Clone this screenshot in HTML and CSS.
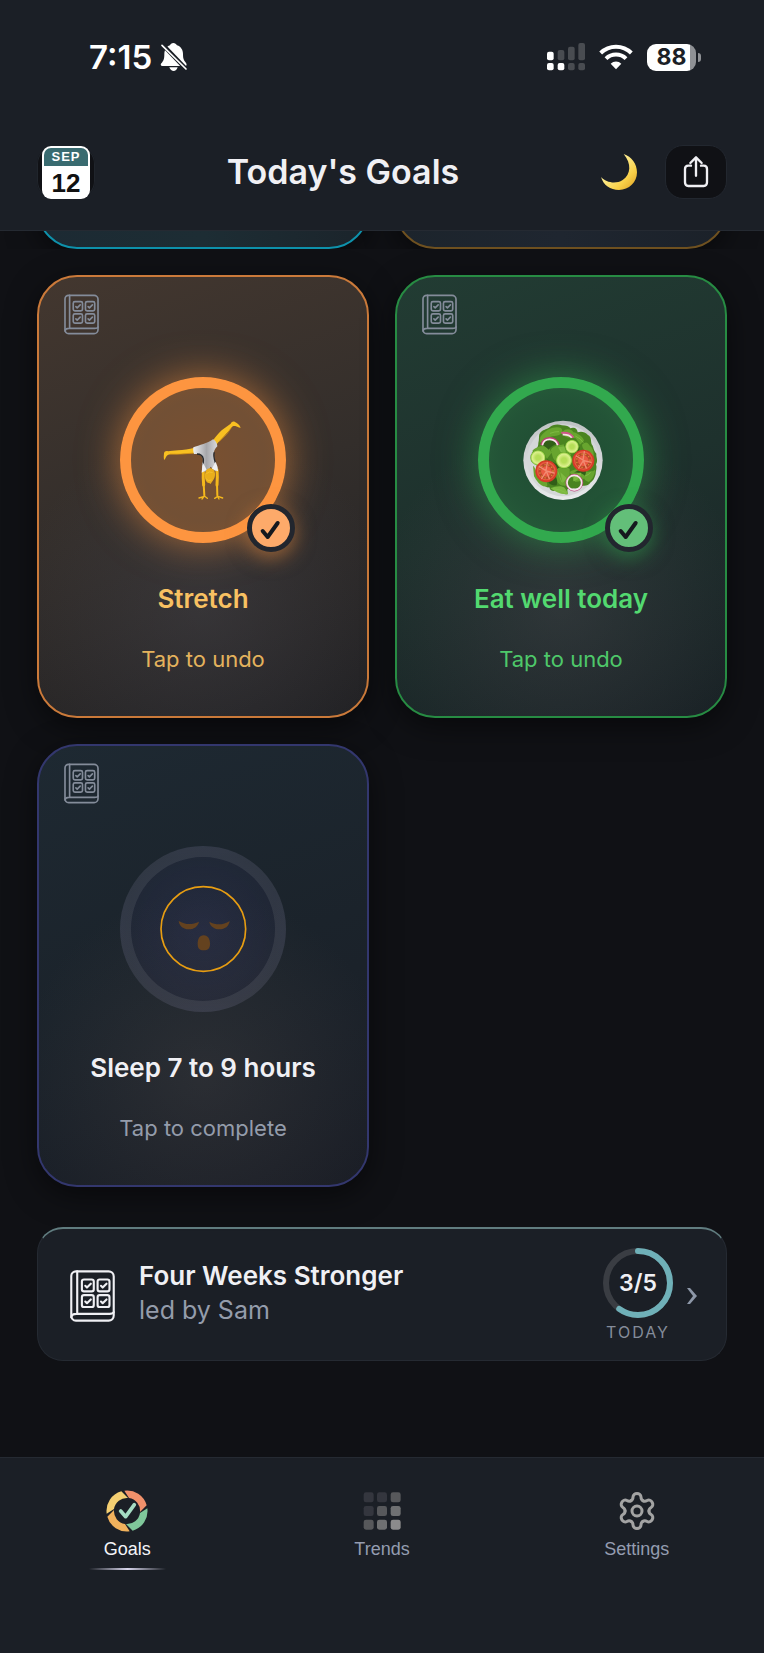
FILE: index.html
```html
<!DOCTYPE html>
<html lang="en">
<head>
  <meta charset="UTF-8" />
  <meta name="viewport" content="width=device-width, initial-scale=1.0"/>
  <title>Today's Goals</title>
  <link rel="stylesheet" href="styles.css">
</head>
<body>
  <!-- Shared icons -->
  <svg class="sprite" width="0" height="0" aria-hidden="true">
    <symbol id="book" viewBox="0 0 106 122">
      <g fill="none" stroke="currentColor" stroke-width="5" stroke-linecap="round" stroke-linejoin="round">
        <path d="M14 3h77a12 12 0 0 1 12 12v92a12 12 0 0 1-12 12H14a11 11 0 0 1-11-12V14A11 11 0 0 1 14 3z"/>
        <path d="M17 3v100M3 111q1-8 12-8h78q8 0 10-4"/>
        <rect x="28" y="22" width="28" height="28" rx="5"/>
        <rect x="65" y="22" width="28" height="28" rx="5"/>
        <rect x="28" y="59" width="28" height="28" rx="5"/>
        <rect x="65" y="59" width="28" height="28" rx="5"/>
        <path d="M36 37l4 4 9-9M73 37l4 4 9-9M36 74l4 4 9-9M73 74l4 4 9-9"/>
      </g>
    </symbol>
    <symbol id="check" viewBox="331 327 114 114">
      <path d="M363 393l15 18 30-42" fill="none" stroke="#15191e" stroke-width="12" stroke-linecap="round" stroke-linejoin="round"/>
    </symbol>
  </svg>

  <header class="top">
    <div class="status">
      <div class="clock">
        <span>7:15</span>
        <svg width="28" height="30" viewBox="480 126 84 90" aria-hidden="true">
          <path fill="#fff" d="M520 129c5 0 9 3 11 7 12 4 18 14 18 27 0 15 3 19 9 26 3 4 2 9-2 9h-69c-5 0-6-5-3-8 6-7 9-12 9-27 0-13 6-23 17-27 1-4 5-7 10-7z"/>
          <path fill="#fff" d="M508 202h25c-2 7-7 11-12 11s-11-4-13-11z"/>
          <path d="M482 128l79 82" stroke="#1b1f26" stroke-width="13"/>
          <path d="M486 136l72 71" stroke="#fff" stroke-width="5" stroke-linecap="round"/>
        </svg>
      </div>
      <div class="signals">
        <svg width="38" height="28" viewBox="498 128 114 84" aria-hidden="true">
          <g fill="#fff">
            <rect x="498" y="154" width="20" height="26" rx="6"/>
            <rect x="498" y="188" width="20" height="22" rx="6"/>
            <rect x="530" y="188" width="20" height="22" rx="6"/>
          </g>
          <g fill="#494c51">
            <rect x="530" y="149" width="20" height="31" rx="6"/>
            <rect x="561" y="139" width="20" height="41" rx="6"/>
            <rect x="592" y="128" width="20" height="52" rx="6"/>
            <rect x="561" y="188" width="20" height="22" rx="6"/>
            <rect x="592" y="188" width="20" height="22" rx="6"/>
          </g>
        </svg>
        <svg width="34" height="28" viewBox="653 128 102 84" aria-hidden="true">
          <g fill="none" stroke="#fff" stroke-width="12">
            <path d="M658 158a66 66 0 0 1 92 0"/>
            <path d="M674 175a43 43 0 0 1 60 0"/>
          </g>
          <path fill="#fff" d="M688 190a23 23 0 0 1 32 0l-16 17z"/>
        </svg>
        <div class="battery"><span>88</span></div>
      </div>
    </div>
    <div class="bar">
      <button class="date-btn" type="button">
        <span class="cal">
          <span class="cal-month">SEP</span>
          <span class="cal-day">12</span>
        </span>
      </button>
      <h1>Today's Goals</h1>
      <div class="actions">
        <button class="moon-btn" type="button" aria-label="Dark mode">
          <svg width="38" height="38" viewBox="652 456 114 114" aria-hidden="true">
            <defs>
              <linearGradient id="moonFill" x1="0" y1="0" x2="1" y2="1">
                <stop offset="0.4" stop-color="#fdea8a"/>
                <stop offset="0.7" stop-color="#f9d048"/>
                <stop offset="1" stop-color="#d99a22"/>
              </linearGradient>
            </defs>
            <path fill="url(#moonFill)" d="M723 459c24 8 40 29 40 55 0 30-24 53-54 53-26 0-47-15-54-39 15 16 43 23 65 9 25-17 27-49 3-78z"/>
          </svg>
        </button>
        <button class="share-btn" type="button" aria-label="Share">
          <svg width="26" height="34" viewBox="902 468 78 102" aria-hidden="true">
            <g fill="none" stroke="#f0f0f4" stroke-width="7" stroke-linecap="round" stroke-linejoin="round">
              <path d="M926 500h-8q-10 0-10 10v40q0 11 10 11h46q10 0 10-11v-40q0-10-10-10h-8"/>
              <path d="M941 530v-54M924 492l17-17 17 17"/>
            </g>
          </svg>
        </button>
      </div>
    </div>
  </header>

  <main>
    <!-- previous row, scrolled under the header -->
    <div class="goals peek">
      <div class="card cyan"></div>
      <div class="card amber"></div>
    </div>

    <div class="goals">
      <button class="card orange done" type="button">
        <svg class="book" aria-hidden="true"><use href="#book"/></svg>
        <span class="ring">
          <svg class="emoji" viewBox="54 45 270 270" aria-hidden="true">
            <defs>
              <linearGradient id="suit" x1="0" y1="0" x2="1" y2="0">
                <stop offset="0" stop-color="#eeeef0"/>
                <stop offset="0.55" stop-color="#a6a6aa"/>
                <stop offset="1" stop-color="#d9d9dc"/>
              </linearGradient>
            </defs>
            <!-- legs -->
            <path fill="#f8c021" d="M164 143c-18 5-34 7-50 8-12 1-22 2-30 3-6-2-11 1-12 6-1 7-1 14 0 20 4-2 5-8 8-12 3-4 6-4 12-5 27 0 49-2 73-3z"/>
            <path fill="#f8c021" d="M218 122c9-12 18-22 27-31 9-7 18-13 27-20 3-6 8-8 13-5 7 3 14 9 17 17-5 1-10-3-16-5-5-1-8 0-11 4-10 13-20 24-30 34-7 7-12 13-18 20z"/>
            <path fill="none" stroke="#d9930f" stroke-width="2" d="M90 162q35 2 70-3M238 124q26-21 36-41"/>
            <!-- arms and hands -->
            <g fill="none" stroke="#f4b81d" stroke-linecap="round" stroke-linejoin="round">
              <path stroke-width="9" d="M190 212q-1 20 1 43M231 210q2 20 0 45"/>
              <path stroke-width="6" d="M191 252l2 34M231 252l1 34"/>
              <path stroke-width="4" d="M193 289l-16 5M192 290l-6 7M194 289l8 6M233 289l-9 6M233 290l4 7M234 289l14 5"/>
            </g>
            <path fill="url(#suit)" d="M160 142c18-7 42-11 59-24 7 3 13 11 13 21-10 9-12 20-10 34 2 10 7 20 8 32l-4 9-14-14-9 15-17-1c-1-12 2-22 3-34-1-8-4-13-12-18-6-1-12 1-15 0-2-6-3-13-2-20z"/>
            <path fill="none" stroke="#27292d" stroke-width="4" d="M171 162c12 0 17 5 19 15 1 7-1 12-1 19M223 157c-4 10 0 22 3 31"/>
            <path fill="#efeff1" d="M188 187l12 22-15 9zM227 185l-12 22 19 7q0-15-7-29z"/>
            <path fill="#e9ae1b" d="M209 205c11 0 17 8 16 20-1 13-7 17-13 27-4-4-8-2-11-5-10-9-9-42 8-42z"/>
            <path fill="none" stroke="#f7c73a" stroke-width="2" d="M199 221q9-9 19-3M197 235q7 11 18 5"/>
          </svg>
          <span class="badge"><svg aria-hidden="true"><use href="#check"/></svg></span>
        </span>
        <span class="name">Stretch</span>
        <span class="hint">Tap to undo</span>
      </button>

      <button class="card green done" type="button">
        <svg class="book" aria-hidden="true"><use href="#book"/></svg>
        <span class="ring">
          <svg class="emoji" viewBox="48 45 270 270" aria-hidden="true">
            <defs>
              <linearGradient id="plate" x1="0" y1="0" x2="0" y2="1">
                <stop offset="0" stop-color="#bfc2c4"/>
                <stop offset="1" stop-color="#e9eaec"/>
              </linearGradient>
              <radialGradient id="cucumber">
                <stop offset="0.3" stop-color="#b5de57"/>
                <stop offset="0.75" stop-color="#ddf08e"/>
                <stop offset="0.9" stop-color="#9bd34a"/>
                <stop offset="1" stop-color="#58961f"/>
              </radialGradient>
            </defs>
            <circle cx="189" cy="181" r="119" fill="url(#plate)"/>
            <circle cx="189" cy="181" r="108" fill="#d4d7d8"/>
            <path fill="#4a8420" d="M118 103c5-12 17-14 29-20 11-10 27-12 39-7 12 0 22 3 25 9 13-5 21 2 22 12 10-4 22-2 31 8 11 5 8 18 11 28 7 8 4 18 14 28-1 12 6 20-1 32 4 10-1 20-1 29-4 12-5 18-15 25-7 11-16 11-26 10-9 5-17 9-24 8-8 1-15 0-20 3l1 15c-16 0-22-8-35-12-13 6-19-2-20-9-13 2-16-8-21-18-11-3-15-14-15-28-6-10 1-20-4-30 4-12-1-19 0-30 3-15 7-16 7-27 3-10 1-19 3-26z"/>
            <path fill="#68a52f" d="M121 111c16-27 49-34 62-27 12 15-3 22-20 24-18 1-30 15-44 20zM187 96c11-13 29-8 33 1 13 0 19 12 8 18-17-3-35 3-41-19zM216 99c17-2 34 11 36 23l-12 12c-6-14-19-23-24-35zM246 134c11-10 17-8 24 4 9 6 12 20 11 32-12-4-34-17-35-36zM98 151c13-12 29-17 47-10l10 17-14 18c-11-18-27-20-43-15zM152 150c10-16 25-13 39-17 3 18 14 21 23 30-5 14-25 17-43 22-16-7-13-23-19-35zM99 197c10 8 9 24 18 29 10 5 27 16 25 33-21 5-34-20-40-30zM165 208c14-9 31-8 44-2 1 22-1 38-13 51-12 1-18-3-24-12zM209 216c14-10 29-11 43-3l3 19c-8 11-20 14-30 13zM251 213c14 3 26 3 34-4 1 14-8 30-19 37-14-4-20-18-15-33z"/>
            <path fill="#315e18" d="M128 136c9-19 28-23 44-5-12 4-21 9-26 18-6-6-13-11-18-13zM209 123c9 4 23 9 30 20l-3 16c-12-12-18-17-27-36zM141 177c18 13 28 9 38 24-6 7-12 6-17 17zM157 222c17 13 15 23 13 34-10 2-22-3-25-10zM252 202c6 10 8 14 3 25-9-7-22-11-34-9z"/>
            <path fill="#7db941" d="M174 142l10 18 15 2-6-23zM151 264c14-4 29-9 41-2 7 7 9 12 12 20-20 3-40-7-53-18zM181 217l7 32 12-15zM220 244c-2-19 14-28 24-25-2 12-10 21-24 25zM246 190c9-4 21-7 34-4l-8 20-27 6z"/>
            <g fill="none" stroke="#8ac44d" stroke-width="2">
              <path d="M150 100q16-6 27-5M226 108q16 7 24 20M102 155q19-3 30 3M180 146l8 17M256 150q8 8 21 13M108 209q14 17 20 30M173 214q7 20 13 33M255 228q12-3 18-13M159 266q20 1 38 12"/>
            </g>
            <path d="M125 135c5-28 44-26 50 0" fill="none" stroke="#bd3e76" stroke-width="8"/>
            <path d="M127 136c5-25 40-23 46 0" fill="none" stroke="#fae4ed" stroke-width="5"/>
            <path d="M184 99q25-3 36 14" fill="none" stroke="#d2558b" stroke-width="6"/>
            <path d="M188 104q19-1 27 9" fill="none" stroke="#f8dfe9" stroke-width="5"/>
            <circle cx="223" cy="248" r="25" fill="none" stroke="#b63976" stroke-width="3"/>
            <circle cx="223" cy="248" r="22" fill="none" stroke="#f8e4ec" stroke-width="5"/>
            <circle cx="216" cy="140" r="21" fill="url(#cucumber)"/>
            <circle cx="114" cy="173" r="23" fill="url(#cucumber)"/>
            <circle cx="192" cy="181" r="25" fill="url(#cucumber)"/>
            <g id="tomato">
              <circle cx="139" cy="214" r="33" fill="#d63b28"/>
              <circle cx="139" cy="213" r="28" fill="#ea5a42"/>
              <circle cx="139" cy="214" r="20" fill="none" stroke="#b8492a" stroke-width="8"/>
              <circle cx="139" cy="214" r="20" fill="none" stroke="#dd8a35" stroke-width="4" stroke-dasharray="4 7"/>
              <path d="M118 200l20 12 4-25M138 213l24 6M139 214l-14 22M139 214l9 22" fill="none" stroke="#f28a72" stroke-width="4" stroke-linecap="round"/>
            </g>
            <use href="#tomato" x="111" y="-32"/>
          </svg>
          <span class="badge"><svg aria-hidden="true"><use href="#check"/></svg></span>
        </span>
        <span class="name">Eat well today</span>
        <span class="hint">Tap to undo</span>
      </button>

      <button class="card indigo" type="button">
        <svg class="book" aria-hidden="true"><use href="#book"/></svg>
        <span class="ring">
          <svg class="emoji" viewBox="415 460 270 270" aria-hidden="true">
            <circle cx="551" cy="595" r="127" fill="none" stroke="#e79d12" stroke-width="5"/>
            <g fill="#64421f">
              <path d="M477 571c20 12 41 12 61 2-3 15-16 23-31 23s-28-9-30-25zM569 573c20 11 41 11 61-2-2 16-15 25-30 25s-29-9-31-23z"/>
              <path d="M552 614c13 0 19 12 19 25 0 14-6 20-19 20s-18-6-18-20c0-13 5-25 18-25z"/>
            </g>
          </svg>
        </span>
        <span class="name">Sleep 7 to 9 hours</span>
        <span class="hint">Tap to complete</span>
      </button>
    </div>

    <a class="program" href="#">
      <svg class="program-book" aria-hidden="true"><use href="#book"/></svg>
      <span class="program-text">
        <span class="program-name">Four Weeks Stronger</span>
        <span class="program-lead">led by Sam</span>
      </span>
      <span class="progress">
        <span class="progress-ring">
          <svg viewBox="0 0 70 70" aria-hidden="true">
            <circle cx="35" cy="35" r="32" fill="none" stroke="#3a3d43" stroke-width="6"/>
            <circle cx="35" cy="35" r="32" fill="none" stroke="#6fb0b8" stroke-width="6" stroke-linecap="round" pathLength="100" stroke-dasharray="60 100" transform="rotate(-90 35 35)"/>
          </svg>
          <span class="count">3/5</span>
        </span>
        <span class="today">TODAY</span>
      </span>
      <svg class="chevron" viewBox="0 0 10 16" aria-hidden="true">
        <path d="M0 0h3l7 8-7 8H0l6-8z" fill="#8d97a8"/>
      </svg>
    </a>
  </main>

  <nav class="tabs">
    <a class="tab active" href="#">
      <svg viewBox="139 146 126 126" aria-hidden="true">
        <defs>
          <path id="seg" d="M194 148a61 61 0 0 1 67 44l-20 20a39 39 0 0 0-33-42z"/>
        </defs>
        <use href="#seg" fill="#f0916b"/>
        <use href="#seg" fill="#7fc79a" transform="rotate(90 202 209)"/>
        <use href="#seg" fill="#f1b15c" transform="rotate(180 202 209)"/>
        <use href="#seg" fill="#f4cf72" transform="rotate(270 202 209)"/>
        <path d="M183 209l15 17 26-36" fill="none" stroke="#a5dcc3" stroke-width="11" stroke-linecap="round" stroke-linejoin="round"/>
      </svg>
      <span>Goals</span>
    </a>
    <a class="tab" href="#">
      <svg viewBox="903 146 126 126" aria-hidden="true">
        <g fill="#34363e">
          <rect x="911" y="153" width="30" height="30" rx="7"/>
          <rect x="951" y="153" width="30" height="30" rx="7"/>
          <rect x="911" y="194" width="30" height="30" rx="7"/>
        </g>
        <g fill="#57585b">
          <rect x="992" y="153" width="30" height="30" rx="7"/>
          <rect x="951" y="194" width="30" height="30" rx="7"/>
          <rect x="911" y="235" width="30" height="30" rx="7"/>
        </g>
        <g fill="#6f7072">
          <rect x="992" y="194" width="30" height="30" rx="7"/>
          <rect x="951" y="235" width="30" height="30" rx="7"/>
        </g>
        <rect x="992" y="235" width="30" height="30" rx="7" fill="#8b8b8c"/>
      </svg>
      <span>Trends</span>
    </a>
    <a class="tab" href="#">
      <svg viewBox="167 146 126 126" aria-hidden="true">
        <g fill="none" stroke="#a3a3a3" stroke-width="9" stroke-linecap="round">
          <path id="cog" d="M212 178c6-3 6-6 6-11 0-14 24-14 24 0 0 5 0 8 6 11"/>
          <use href="#cog" transform="rotate(60 230 209)"/>
          <use href="#cog" transform="rotate(120 230 209)"/>
          <use href="#cog" transform="rotate(180 230 209)"/>
          <use href="#cog" transform="rotate(240 230 209)"/>
          <use href="#cog" transform="rotate(300 230 209)"/>
          <circle cx="230" cy="209" r="15"/>
        </g>
      </svg>
      <span>Settings</span>
    </a>
  </nav>
</body>
</html>
```
FILE: styles.css
```css
* {
  box-sizing: border-box;
}
body {
  margin: 0;
  font-family: Inter, "Liberation Sans", sans-serif;
  background: #101115;
  color: #f0f0f4;
}
button {
  padding: 0;
  border: none;
  background: none;
  color: inherit;
  font-family: inherit;
  cursor: pointer;
}
a {
  color: inherit;
  text-decoration: none;
}
.sprite {
  position: absolute;
}

/* header */
.top {
  background: #1b1f26;
  border-bottom: 1px solid #252a32;
}
.status {
  display: flex;
  justify-content: space-between;
  align-items: center;
  padding: 37px 68px 0 89px;
}
.clock, .signals {
  display: flex;
  align-items: center;
  height: 40px;
}
.clock {
  gap: 8px;
  font-size: 33px;
  font-weight: 600;
  line-height: 40px;
  color: #fff;
}
.signals {
  gap: 14px;
}
.battery {
  display: flex;
  align-items: center;
  justify-content: center;
  position: relative;
  width: 49px;
  height: 27px;
  border-radius: 9px;
  background: linear-gradient(90deg, #fff 88%, #8f9195 88%);
  color: #1b1f26;
  font-size: 23px;
  font-weight: 700;
  line-height: 27px;
}
.battery::after {
  content: "";
  position: absolute;
  left: 51px;
  top: 9px;
  width: 3px;
  height: 9px;
  border-radius: 0 4px 4px 0;
  background: #8f9195;
}
.bar {
  display: flex;
  align-items: center;
  padding: 68px 37px 31px;
}
.date-btn {
  display: flex;
  justify-content: center;
  width: 58px;
  border-radius: 18px;
  background: #101115;
  box-shadow: inset 0 0 0 1px #20252c;
}
.cal {
  display: flex;
  flex-direction: column;
  width: 48px;
  height: 53px;
  padding: 2px;
  border-radius: 9px;
  background: #fff;
  font-family: "Liberation Sans", Arial, sans-serif;
  font-weight: 700;
  text-align: center;
}
.cal-month {
  border-radius: 7px 7px 0 0;
  background: #396b70;
  color: #fff;
  font-size: 13px;
  line-height: 18px;
  letter-spacing: 1px;
}
.cal-day {
  color: #111;
  font-size: 26px;
  line-height: 35px;
}
h1 {
  flex: 1;
  margin: 0;
  font-size: 34px;
  font-weight: 600;
  line-height: 44px;
  text-align: center;
}
.actions {
  display: flex;
  align-items: center;
  gap: 18px;
}
.moon-btn, .share-btn {
  display: flex;
  align-items: center;
  justify-content: center;
  height: 54px;
}
.moon-btn {
  width: 56px;
}
.share-btn {
  width: 62px;
  border: 1px solid #22272f;
  border-radius: 18px;
  background: #101115;
}

/* goals */
main {
  padding: 0 37px 96px;
}
.goals {
  display: grid;
  grid-template-columns: 1fr 1fr;
  gap: 26px;
  margin-bottom: 40px;
}
.goals.peek {
  align-content: end;
  height: 18px;
  margin: 0 -37px 26px;
  padding: 0 37px;
  overflow: hidden;
}
.peek .card {
  height: 90px;
}
.card {
  display: flex;
  flex-direction: column;
  align-items: center;
  padding: 17px 25px 43px;
  border: 2px solid;
  border-radius: 40px;
  box-shadow: 0 8px 30px rgba(0, 0, 0, 0.5);
}
.cyan {
  border-color: #0e92ac;
  background: linear-gradient(90deg, #1c2a33, #1d2d34, #1b242b);
}
.amber {
  border-color: #6f5120;
  background: linear-gradient(90deg, #1c242c, #1f2630, #1b2129);
}
.orange {
  border-color: #cb7a3a;
  background:
    radial-gradient(circle at 50% 75%, rgba(80, 80, 90, 0.3), transparent 50%),
    linear-gradient(160deg, #43372f, #332e2b 50%, #222225);
}
.green {
  border-color: #278c43;
  background:
    radial-gradient(circle at 50% 75%, rgba(90, 80, 90, 0.3), transparent 50%),
    linear-gradient(160deg, #223c33, #1e312d 50%, #1a2226);
}
.indigo {
  border-color: #33376e;
  background:
    radial-gradient(circle at 50% 75%, rgba(80, 75, 75, 0.3), transparent 50%),
    linear-gradient(160deg, #1e2932, #1b232b 50%, #1b1e26);
}
.book {
  align-self: flex-start;
  width: 35px;
  height: 41px;
  color: #848c9a;
}
.ring {
  display: flex;
  align-items: center;
  justify-content: center;
  position: relative;
  width: 166px;
  height: 166px;
  margin: 42px 0 40px;
  border: 11px solid rgba(255, 255, 255, 0.08);
  border-radius: 50%;
}
.orange .ring {
  border-color: #fd9540;
  background: radial-gradient(circle, #7a5030, #725035 60%, #80532f);
  box-shadow: 0 0 40px rgba(253, 149, 64, 0.6);
}
.green .ring {
  border-color: #32a94e;
  background: radial-gradient(circle, #1f4a31, #235437 60%, #29633b);
  box-shadow: 0 0 40px rgba(50, 169, 78, 0.6);
}
.indigo .ring {
  background: radial-gradient(circle, rgba(60, 60, 110, 0.3), rgba(50, 50, 90, 0.12));
}
.emoji {
  width: 90px;
  height: 90px;
}
.badge {
  position: absolute;
  right: -20px;
  bottom: -20px;
  width: 48px;
  height: 48px;
  border: 5px solid #22262e;
  border-radius: 50%;
}
.badge svg {
  display: block;
  width: 38px;
  height: 38px;
}
.orange .badge {
  background: #fdaa6a;
  box-shadow: 0 6px 20px rgba(253, 149, 64, 0.5);
}
.green .badge {
  background: #63bf79;
  box-shadow: 0 6px 20px rgba(50, 169, 78, 0.5);
}
.name {
  font-size: 26px;
  font-weight: 600;
  line-height: 32px;
}
.hint {
  margin-top: 30px;
  color: #949cab;
  font-size: 22px;
  line-height: 28px;
}
.orange .name, .orange .hint {
  color: #f8c162;
}
.green .name, .green .hint {
  color: #53d970;
}
.orange .hint, .green .hint {
  opacity: 0.9;
}

/* program */
.program {
  display: flex;
  align-items: center;
  padding: 19px 29px 16px 32px;
  border: 1px solid #252a32;
  border-top: 2px solid #617d80;
  border-radius: 26px;
  background: #1b1f26;
}
.program-book {
  width: 45px;
  height: 52px;
}
.program-text {
  display: flex;
  flex: 1;
  flex-direction: column;
  margin-left: 24px;
  padding-bottom: 6px;
}
.program-name, .program-lead {
  line-height: 35px;
}
.program-name {
  font-size: 26px;
  font-weight: 600;
}
.program-lead {
  color: #949cab;
  font-size: 25px;
}
.progress {
  display: flex;
  flex-direction: column;
  align-items: center;
}
.progress-ring {
  display: grid;
  place-items: center;
  width: 70px;
  height: 70px;
}
.progress-ring > * {
  grid-area: 1 / 1;
}
.count {
  font-size: 23px;
  font-weight: 600;
  line-height: 28px;
}
.today {
  margin-top: 2px;
  color: #848c9a;
  font-size: 16px;
  line-height: 24px;
  letter-spacing: 2px;
}
.chevron {
  width: 10px;
  height: 16px;
  margin-left: 14px;
}

/* bottom tabs */
.tabs {
  display: grid;
  grid-template-columns: repeat(3, 1fr);
  height: 197px;
  padding-top: 32px;
  border-top: 1px solid #252a32;
  background: #1b1f26;
  font-family: "Liberation Sans", Arial, sans-serif;
  font-size: 18px;
}
.tab {
  display: flex;
  flex-direction: column;
  align-items: center;
  color: #949cb0;
}
.tab svg {
  width: 42px;
  height: 42px;
}
.tab span {
  margin-top: 7px;
  line-height: 20px;
}
.tab.active {
  color: #f4f4f8;
}
.tab.active::after {
  content: "";
  width: 77px;
  height: 2px;
  margin-top: 9px;
  background: linear-gradient(90deg, transparent, #d8d6ec, transparent);
}
```
